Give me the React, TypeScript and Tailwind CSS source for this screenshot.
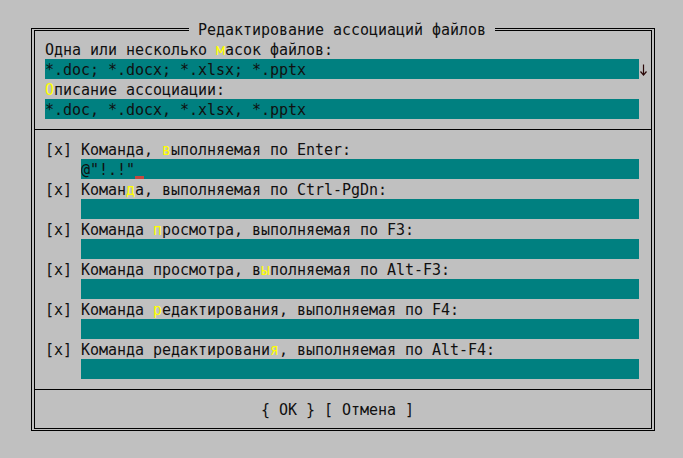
import React from "react";

type CellsProps = { text: string; cursorAt?: number };

function Cells({ text, cursorAt }: CellsProps) {
  const out: React.ReactNode[] = [];
  let hot = false;
  let k = 0;
  for (const ch of Array.from(text)) {
    if (ch === "&" && !hot) {
      hot = true;
      continue;
    }
    out.push(
      <span
        key={k++}
        className={
          "inline-block w-[9px] text-center " + (hot ? "text-[#ffff00]" : "")
        }
      >
        {ch === " " ? "\u00a0" : ch}
      </span>
    );
    hot = false;
  }
  if (cursorAt !== undefined) {
    out.push(
      <span key="cur" className="relative inline-block w-[9px] h-[20px] align-top">
        <span className="absolute left-0 right-0 bottom-0 h-[3px] bg-[#c4473f]" />
      </span>
    );
  }
  return <>{out}</>;
}

function Label({ text }: { text: string }) {
  return (
    <div className="h-[20px] leading-[22px] pl-[10px] whitespace-nowrap">
      <Cells text={text} />
    </div>
  );
}

function Field({
  text,
  left,
  width,
  arrow,
  cursor,
}: {
  text: string;
  left: string;
  width: string;
  arrow?: boolean;
  cursor?: boolean;
}) {
  return (
    <div className="h-[20px] flex">
      <div
        className={
          "h-[20px] leading-[22px] bg-[#008080] whitespace-nowrap overflow-hidden " +
          left +
          " " +
          width
        }
      >
        <Cells text={text} cursorAt={cursor ? 1 : undefined} />
      </div>
      {arrow && (
        <div className="w-[9px] h-[20px] flex items-center justify-center">
          <svg width="9" height="12" viewBox="0 0 9 12" className="mt-[1px]">
            <path d="M4.5 0.5 V10.5" stroke="#2a0808" strokeWidth="1.2" fill="none" />
            <path d="M1.5 7.5 L4.5 11 L7.5 7.5" stroke="#2a0808" strokeWidth="1.2" fill="none" />
          </svg>
        </div>
      )}
    </div>
  );
}

function Separator() {
  return (
    <div className="h-[20px] pt-[10px]">
      <div className="h-px bg-black" />
    </div>
  );
}

const commands = [
  { label: "[x] Команда, &выполняемая по Enter:", value: '@"!.!"', cursor: true },
  { label: "[x] Коман&да, выполняемая по Ctrl-PgDn:", value: "" },
  { label: "[x] Команда &просмотра, выполняемая по F3:", value: "" },
  { label: "[x] Команда просмотра, в&ыполняемая по Alt-F3:", value: "" },
  { label: "[x] Команда &редактирования, выполняемая по F4:", value: "" },
  { label: "[x] Команда редактировани&я, выполняемая по Alt-F4:", value: "" },
];

export default function App() {
  return (
    <div className="w-[683px] h-[458px] bg-[#c0c0c0] text-[#101010] text-[15px] font-['DejaVu_Sans_Mono',monospace] overflow-hidden">
      <div className="pt-[28px] pl-[31px]">
        <div className="relative w-[624px] h-[403px] border border-black px-[2px] py-px">
          <div className="absolute left-[157px] top-[-10px] h-[20px] leading-[22px] bg-[#c0c0c0] whitespace-nowrap">
            <Cells text=" Редактирование ассоциаций файлов " />
          </div>
          <div className="w-full h-full border border-black pt-[8px]">
            <Label text="Одна или несколько &масок файлов:" />
            <Field
              text="*.doc; *.docx; *.xlsx; *.pptx"
              left="ml-[10px]"
              width="w-[594px]"
              arrow
            />
            <Label text="&Описание ассоциации:" />
            <Field
              text="*.doc, *.docx, *.xlsx, *.pptx"
              left="ml-[10px]"
              width="w-[594px]"
            />
            <Separator />
            {commands.map((c, idx) => (
              <React.Fragment key={idx}>
                <Label text={c.label} />
                <Field
                  text={c.value}
                  left="ml-[46px]"
                  width="w-[558px]"
                  cursor={c.cursor}
                />
              </React.Fragment>
            ))}
            <Separator />
            <div className="h-[20px] leading-[22px] pl-[226px] whitespace-nowrap">
              <Cells text="{ OK } [ Отмена ]" />
            </div>
          </div>
        </div>
      </div>
    </div>
  );
}
